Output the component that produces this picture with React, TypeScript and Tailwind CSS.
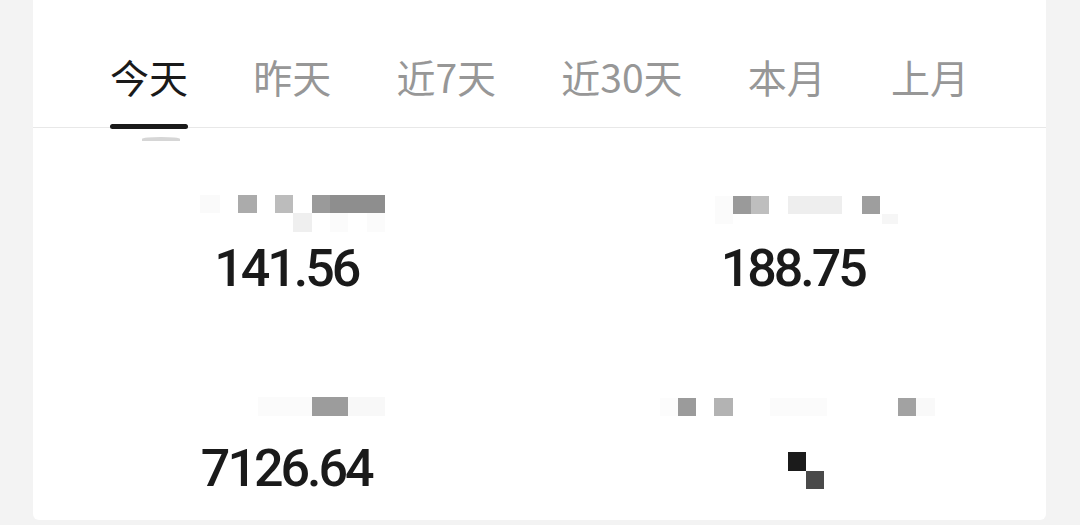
import React from "react";

type R = [number, number, number, number, string];

function Mosaic({ rects, h }: { rects: R[]; h: number }) {
  return (
    <svg width="506" height={h} viewBox={`0 0 506 ${h}`} className="block shrink-0">
      {rects.map(([x, y, w, hh, c], i) => (
        <rect key={i} x={x} y={y} width={w} height={hh} fill={c} />
      ))}
    </svg>
  );
}

const leftTop: R[] = [
  [167, 5, 20, 18, "#fafafa"],
  [205, 5, 19, 18, "#ababab"],
  [242, 5, 18, 18, "#bcbcbc"],
  [279, 5, 18, 18, "#9a9a9a"],
  [297, 5, 55, 18, "#8e8e8e"],
  [260, 23, 19, 19, "#efefef"],
  [297, 23, 18, 19, "#fbfbfb"],
  [334, 23, 18, 19, "#fbfbfb"],
];

const rightTop: R[] = [
  [175, 6, 18, 18, "#fbfbfb"],
  [193, 6, 18, 18, "#9a9a9a"],
  [211, 6, 18, 18, "#bebebe"],
  [248, 6, 54, 18, "#eeeeee"],
  [322, 6, 18, 18, "#9e9e9e"],
  [342, 24, 16, 10, "#f6f6f6"],
  [175, 24, 18, 10, "#fbfbfb"],
];

const leftBottom: R[] = [
  [225, 5, 54, 19, "#fbfbfb"],
  [279, 5, 36, 19, "#9c9c9c"],
  [315, 5, 37, 19, "#f8f8f8"],
];

const rightBottom: R[] = [
  [120, 6, 18, 18, "#fcfcfc"],
  [138, 6, 18, 18, "#9b9b9b"],
  [174, 6, 19, 18, "#b3b3b3"],
  [230, 6, 57, 18, "#fbfbfb"],
  [358, 6, 18, 18, "#a2a2a2"],
  [376, 6, 19, 18, "#f9f9f9"],
];

const rightValue: R[] = [
  [248, 9, 18, 19, "#1b1b1b"],
  [266, 28, 18, 18, "#4a4a4a"],
];

const tabs = ["今天", "昨天", "近7天", "近30天", "本月", "上月"];

function Num({ v }: { v: string }) {
  return (
    <div
      className="text-[52px] leading-[52px] font-medium text-[#1a1a1a] tracking-[-3px]"
      style={{ fontFamily: "Roboto, 'Noto Sans', sans-serif" }}
    >
      {v}
    </div>
  );
}

export default function App() {
  return (
    <div
      className="w-[1080px] h-[525px] bg-[#f3f3f3] overflow-hidden"
      style={{ fontFamily: "'Noto Sans CJK SC', 'Noto Sans', sans-serif" }}
    >
      <div className="relative ml-[33px] mr-[34px] h-[520px] bg-white rounded-b-[6px]">
        <div className="flex h-[128px] justify-between border-b border-[#e8e8e8] px-[77px]">
          {tabs.map((t, i) => (
            <div key={t} className="relative h-[128px] pt-[57px]">
              <span
                className={`block text-[39px] leading-[39px] ${
                  i === 0 ? "text-[#1a1a1a]" : "text-[#979797]"
                }`}
              >
                {t}
              </span>
              {i === 0 && (
                <div className="absolute left-0 right-0 bottom-[-1px] h-[5px] rounded-full bg-[#1a1a1a]" />
              )}
            </div>
          ))}
        </div>
        <div className="absolute left-[109px] top-[137px] h-[4px] w-[38px] rounded-t-[50%] bg-[#d6d6d6]" />
        <div className="grid grid-cols-2">
          <div className="flex flex-col items-center pt-[62px]">
            <Mosaic rects={leftTop} h={45} />
            <div className="mt-[8px]">
              <Num v="141.56" />
            </div>
            <div className="mt-[97px]">
              <Mosaic rects={leftBottom} h={45} />
            </div>
            <div className="mt-[6px]">
              <Num v="7126.64" />
            </div>
          </div>
          <div className="flex flex-col items-center pt-[62px]">
            <Mosaic rects={rightTop} h={45} />
            <div className="mt-[8px]">
              <Num v="188.75" />
            </div>
            <div className="mt-[97px]">
              <Mosaic rects={rightBottom} h={45} />
            </div>
            <div className="mt-[6px]">
              <Mosaic rects={rightValue} h={52} />
            </div>
          </div>
        </div>
      </div>
    </div>
  );
}
